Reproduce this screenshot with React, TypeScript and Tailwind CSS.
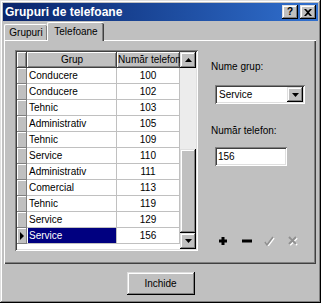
const rows: [string, string][] = [
  ['Conducere', '100'],
  ['Conducere', '102'],
  ['Tehnic', '103'],
  ['Administrativ', '105'],
  ['Tehnic', '109'],
  ['Service', '110'],
  ['Administrativ', '111'],
  ['Comercial', '113'],
  ['Tehnic', '119'],
  ['Service', '129'],
  ['Service', '156'],
];

const raised =
  'shadow-[inset_-1px_-1px_0_#000,inset_1px_1px_0_#dfdfdf,inset_-2px_-2px_0_#808080,inset_2px_2px_0_#fff]';
const sunken =
  'shadow-[inset_1px_1px_0_#808080,inset_-1px_-1px_0_#fff,inset_2px_2px_0_#404040,inset_-2px_-2px_0_#dfdfdf]';
const cellRaised = 'shadow-[inset_-1px_-1px_0_#404040,inset_1px_1px_0_#fff,inset_-2px_-2px_0_#808080]';

function TitleBar() {
  return (
    <div className="flex h-[18px] items-center justify-between bg-gradient-to-r from-[#0a246a] to-[#3170cf] pl-[2px] pr-[2px]">
      <span className="text-[12px] font-bold leading-none text-white">Grupuri de telefoane</span>
      <div className="flex gap-[2px]">
        <div className={`flex h-[14px] w-[16px] items-center justify-center bg-[#c0c0c0] text-[10px] font-bold leading-none ${raised}`}>
          ?
        </div>
        <div className={`flex h-[14px] w-[16px] items-center justify-center bg-[#c0c0c0] ${raised}`}>
          <svg width="8" height="7" viewBox="0 0 8 7">
            <path d="M0 0h2l2 2 2-2h2L5 3.5 8 7H6L4 5 2 7H0l3-3.5z" fill="#000" />
          </svg>
        </div>
      </div>
    </div>
  );
}

function Tabs() {
  return (
    <div className="mt-[1px] flex h-[18px] items-end pl-[1px]">
      <div className="flex h-[16px] w-[43px] items-center justify-center rounded-t-[2px] border-l border-t border-white shadow-[inset_-1px_0_0_#808080] pt-[1px]">
        Grupuri
      </div>
      <div className="relative z-10 -mb-[1px] flex h-[19px] w-[57px] items-center justify-center rounded-t-[2px] border-l border-t border-white bg-[#c0c0c0] shadow-[inset_-1px_0_0_#404040,inset_-2px_0_0_#808080] pb-[1px]">
        Telefoane
      </div>
    </div>
  );
}

function ScrollBar() {
  return (
    <div className="flex w-[16px] flex-col">
      <div className={`flex h-[16px] items-center justify-center bg-[#c0c0c0] ${raised}`}>
        <svg width="7" height="4" viewBox="0 0 7 4">
          <path d="M3.5 0L7 4H0z" fill="#000" />
        </svg>
      </div>
      <div className="flex flex-1 flex-col justify-end bg-[#ececec]">
        <div className={`h-[84px] bg-[#c0c0c0] ${raised}`} />
      </div>
      <div className={`flex h-[16px] items-center justify-center bg-[#c0c0c0] ${raised}`}>
        <svg width="7" height="4" viewBox="0 0 7 4">
          <path d="M0 0h7L3.5 4z" fill="#000" />
        </svg>
      </div>
    </div>
  );
}

function Grid() {
  return (
    <div className={`flex h-[201px] w-[183px] bg-white p-[2px] ${sunken}`}>
      <div className="flex w-[163px] flex-col">
        <div className="flex h-[16px]">
          <div className={`w-[10px] bg-[#c0c0c0] ${cellRaised}`} />
          <div className={`flex w-[90px] items-center justify-center bg-[#c0c0c0] ${cellRaised}`}>Grup</div>
          <div className={`flex w-[63px] items-center justify-center overflow-hidden whitespace-nowrap bg-[#c0c0c0] pl-[2px] ${cellRaised}`}>
            Număr telefon
          </div>
        </div>
        {rows.map(([grup, nr], i) => {
          const current = i === rows.length - 1;
          return (
            <div key={i} className="flex h-[16px]">
              <div className="flex w-[10px] items-center justify-center bg-[#c0c0c0] shadow-[inset_-1px_-1px_0_#808080,inset_1px_1px_0_#fff]">
                {current && (
                  <svg width="4" height="8" viewBox="0 0 4 8">
                    <path d="M0 0l4 4-4 4z" fill="#000" />
                  </svg>
                )}
              </div>
              <div className="flex w-[90px] items-center border-r border-b border-[#c0c0c0] pl-[1px]">
                <div className={`flex h-full w-full items-center pl-[1px] ${current ? 'bg-[#000080] text-white' : ''}`}>{grup}</div>
              </div>
              <div className="flex w-[63px] items-center justify-center border-r border-b border-[#c0c0c0]">{nr}</div>
            </div>
          );
        })}
      </div>
      <ScrollBar />
    </div>
  );
}

function RightPane() {
  return (
    <div className="ml-[13px] flex flex-col">
      <div className="mt-[11px] leading-[12px]">Nume grup:</div>
      <div className={`ml-[4px] mt-[12px] flex h-[19px] w-[90px] items-center justify-between bg-white p-[2px] ${sunken}`}>
        <span className="pl-[2px]">Service</span>
        <div className={`flex h-[15px] w-[16px] items-center justify-center bg-[#c0c0c0] ${raised}`}>
          <svg width="7" height="4" viewBox="0 0 7 4">
            <path d="M0 0h7L3.5 4z" fill="#000" />
          </svg>
        </div>
      </div>
      <div className="mt-[21px] leading-[12px]">Număr telefon:</div>
      <div className={`ml-[4px] mt-[10px] flex h-[19px] w-[72px] items-center bg-white pl-[3px] ${sunken}`}>156</div>
      <div className="mt-[69px] flex h-[12px] items-center">
        <svg className="ml-[7px]" width="10" height="10" viewBox="0 0 10 10">
          <path d="M3.5 1h3v2.5H9v3H6.5V9h-3V6.5H1v-3h2.5z" fill="#000" />
        </svg>
        <svg className="ml-[14px]" width="10" height="10" viewBox="0 0 10 10">
          <path d="M0 3.5h10v3H0z" fill="#000" />
        </svg>
        <svg className="ml-[11px]" width="12" height="10" viewBox="0 0 12 10">
          <path d="M2 6l2 3 6-8" stroke="#fff" strokeWidth="1.6" fill="none" transform="translate(1 1)" />
          <path d="M2 6l2 3 6-8" stroke="#909090" strokeWidth="1.6" fill="none" />
        </svg>
        <svg className="ml-[12px]" width="11" height="10" viewBox="0 0 11 10">
          <path d="M2 1l7 7M9 1L2 8" stroke="#fff" strokeWidth="2" transform="translate(1 1)" />
          <path d="M2 1l7 7M9 1L2 8" stroke="#909090" strokeWidth="2" />
        </svg>
      </div>
    </div>
  );
}

export default function App() {
  return (
    <div
      className={`flex h-[303px] w-[321px] flex-col bg-[#c0c0c0] p-[3px] font-['Liberation_Sans',Arial,sans-serif] text-[10px] leading-none text-black ${raised}`}
    >
      <TitleBar />
      <Tabs />
      <div className="ml-[1px] flex h-[224px] w-[312px] border-l border-t border-white pl-[10px] pt-[9px] shadow-[inset_-1px_-1px_0_#404040,inset_-2px_-2px_0_#808080]">
        <Grid />
        <RightPane />
      </div>
      <div className="mt-[8px] flex justify-center">
        <button className={`h-[23px] w-[68px] bg-[#c0c0c0] text-[10px] ${raised}`}>Inchide</button>
      </div>
    </div>
  );
}
